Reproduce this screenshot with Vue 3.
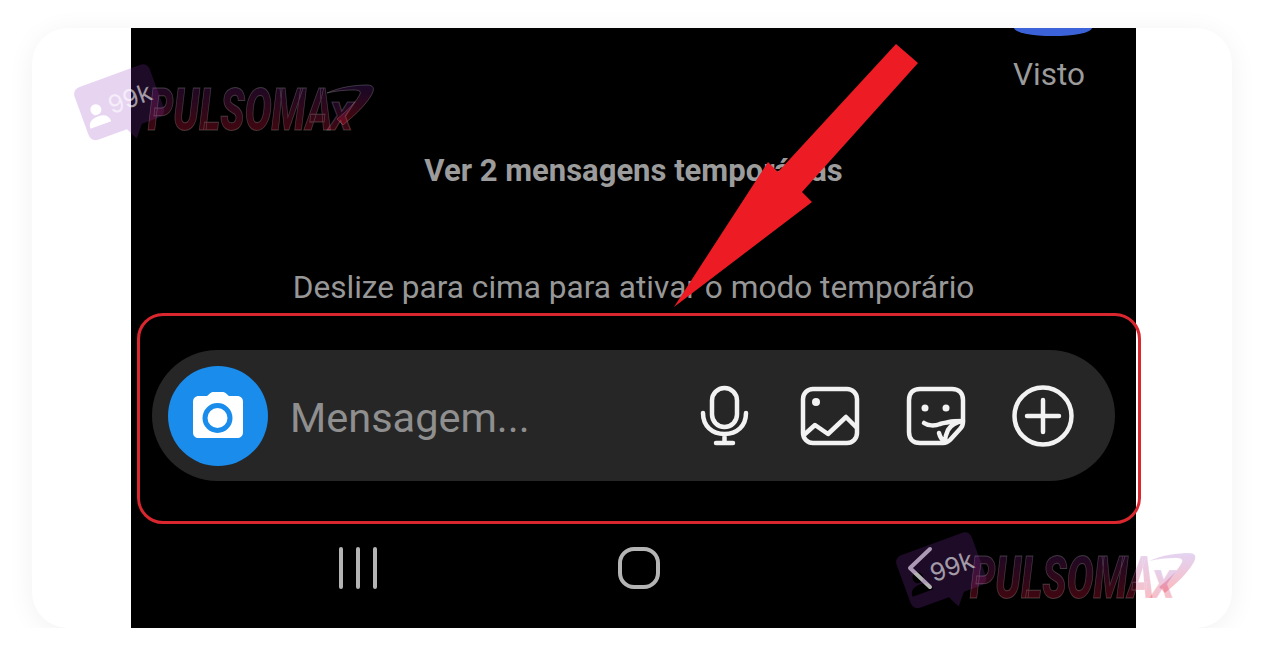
<template>
  <div class="card">
    <div class="phone">
      <div class="avatar" />
      <div class="seen">Visto</div>
      <div class="temp-link">Ver 2 mensagens temporárias</div>
      <div class="temp-hint">Deslize para cima para ativar o modo temporário</div>

      <!-- Message bar -->
      <div class="bar">
        <div class="camera">
          <svg width="56" height="50" viewBox="0 0 56 50">
            <path fill="#fff" d="M9 5h6.500c1.500 0 2.500-.5 3.500-1.800C20.500 1.500 22 1 24 1h8c2 0 3.500.5 5 2.200 1 1.300 2 1.800 3.500 1.800H47c4 0 6 2.500 6 6v30c0 4-2.500 6-6 6H9c-4 0-6-2-6-6V11c0-3.500 2-6 6-6z" />
            <circle cx="27.500" cy="27" r="12.500" fill="none" stroke="#1a8cec" stroke-width="5" />
          </svg>
        </div>
        <span class="placeholder">Mensagem...</span>
        <div class="bar-icons">
          <svg class="ic" width="60" height="62" viewBox="0 0 60 62">
            <rect x="18" y="3" width="25" height="39" rx="12.500" />
            <path d="M9 28c0 13 9 21 21.500 21S52 41 52 28M30.500 49v9M22 58h17" />
          </svg>
          <svg class="ic" width="60" height="62" viewBox="0 0 60 62">
            <rect x="3" y="4" width="54" height="54" rx="10" />
            <circle class="solid" cx="16" cy="17" r="4" />
            <path d="M5 49l10-9 13 9 18-17 10 10" />
          </svg>
          <svg class="ic" width="60" height="62" viewBox="0 0 60 62">
            <path d="M57 37V15C57 8 53 4 46 4H14C7 4 3 8 3 15v32c0 7 4 11 11 11h23c3 0 5-1 7-3l10-11c2-2 3-4 3-7z" />
            <circle class="solid" cx="19" cy="23" r="3.500" />
            <circle class="solid" cx="40" cy="23" r="3.500" />
            <path d="M18 38c4 3 11 3 16 1 3-1 5-1 9-2 4-1 9-1 14-1-7 1-12 4-15 9-2 4-3 9-3 12-3-2-5-5-6-9" />
          </svg>
          <svg class="ic" width="62" height="62" viewBox="0 0 62 62">
            <circle cx="31" cy="31" r="28.500" />
            <path d="M15 31h32M31 15v32" />
          </svg>
        </div>
      </div>

      <!-- Android nav -->
      <div class="nav">
        <div class="nav-slot">
          <svg width="40" height="42" viewBox="0 0 40 42">
            <path class="nav-line" d="M3 2v38M20 2v38M37 2v38" />
          </svg>
        </div>
        <div class="nav-slot">
          <svg width="42" height="42" viewBox="0 0 42 42">
            <rect class="nav-line" x="2" y="2" width="38" height="38" rx="14" />
          </svg>
        </div>
        <div class="nav-slot">
          <svg width="26" height="44" viewBox="0 0 26 44">
            <path class="nav-line" d="M23 3L3 22l20 19" />
          </svg>
        </div>
      </div>
    </div>

    <!-- Annotations -->
    <div class="highlight" />
    <svg class="arrow" width="260" height="280" viewBox="0 0 260 280">
      <polygon fill="#ed1c24" points="240,16 262,35 146,164 156,174 18,279 112,134 122,144" />
    </svg>

    <!-- Watermarks -->
    <svg
      v-for="w in watermarks"
      :key="w.id"
      class="watermark"
      :style="{ left: w.left + 'px', top: w.top + 'px' }"
      width="310"
      height="90"
      viewBox="0 0 310 90"
    >
      <defs>
        <linearGradient :id="'wm-grad-' + w.id" x1="0" y1="0" x2="0" y2="1">
          <stop offset="0" stop-color="rgb(120,40,190)" stop-opacity="0.2" />
          <stop offset="1" stop-color="rgb(255,20,20)" stop-opacity="0.3" />
        </linearGradient>
      </defs>
      <g transform="translate(42,41) rotate(-20)">
        <path
          fill="rgba(140,50,190,.21)"
          fill-rule="evenodd"
          d="M-30-27H34c5 0 8 3 8 8v40c0 5-3 8-8 8H16L6 41 0 29H-30c-5 0-8-3-8-8v-40c0-5 3-8 8-8zM-28 0a5.500 5.500 0 1 0 11 0a5.500 5.500 0 1 0-11 0zM-34 16h22c0-6-4-9-11-9s-11 3-11 9z"
        />
        <text class="wm-count" x="-9" y="10">99k</text>
      </g>
      <g :fill="'url(#wm-grad-' + w.id + ')'" stroke="rgba(255,255,255,.2)" stroke-width="1">
        <path d="M252 32C265 26 280 24 292 24c6 0 8 3 5 9-6 11-17 21-29 31l-6-6c10-8 20-18 23-25 1-3-1-4-7-4-8 0-18 1-26 3z" />
        <text class="wm-text" transform="translate(73,69) scale(.68,1)" x="0" y="0">PULSOMA</text>
        <text class="wm-text wm-x" transform="translate(254,69)" x="0" y="0">X</text>
      </g>
    </svg>
  </div>
</template>

<script setup>
const watermarks = [
  { id: 'a', left: 43, top: 33 },
  { id: 'b', left: 865, top: 501 },
]
</script>

<style scoped>
.card {
  position: relative;
  width: 1200px;
  height: 600px;
  margin: 28px 0 0 32px;
  background: #fff;
  border-radius: 36px;
  box-shadow: 0 4px 28px rgba(0, 0, 0, 0.06);
  overflow: hidden;
}

.phone {
  display: flex;
  flex-direction: column;
  width: 1005px;
  height: 600px;
  margin-left: 99px;
  background: #000;
  font-family: Roboto, "Liberation Sans", sans-serif;
  overflow: hidden;
}

.avatar {
  align-self: flex-end;
  width: 78px;
  height: 8px;
  margin-right: 44px;
  background: #3b62d8;
  border-radius: 0 0 39px 39px / 0 0 8px 8px;
}

.seen {
  align-self: flex-end;
  margin: 22px 51px 0 0;
  color: #9b9b9b;
  font-size: 31.5px;
  line-height: 34px;
}

.temp-link {
  margin-top: 62px;
  color: #9c9c9c;
  font-size: 31px;
  font-weight: 700;
  line-height: 34px;
  text-align: center;
}

.temp-hint {
  margin-top: 83px;
  color: #979797;
  font-size: 31.6px;
  line-height: 34px;
  text-align: center;
}

.bar {
  display: flex;
  align-items: center;
  height: 131px;
  margin: 45px 21px 0;
  padding: 0 41px 0 16px;
  background: #262626;
  border-radius: 66px;
}

.camera {
  display: flex;
  align-items: center;
  justify-content: center;
  width: 100px;
  height: 100px;
  background: #1a8cec;
  border-radius: 50%;
  flex-shrink: 0;
}

.placeholder {
  margin-left: 22px;
  padding-top: 4px;
  color: #8f8f8f;
  font-size: 41.500px;
}

.bar-icons {
  display: flex;
  align-items: center;
  gap: 46px;
  margin-left: auto;
}

.ic {
  fill: none;
  stroke: #f2f2f2;
  stroke-width: 4.500;
  stroke-linecap: round;
  stroke-linejoin: round;
}

.ic .solid {
  fill: #f2f2f2;
  stroke: none;
}

.nav {
  display: flex;
  gap: 221px;
  margin-top: 67px;
  padding-left: 197px;
}

.nav-slot {
  display: flex;
  align-items: center;
  justify-content: center;
  width: 60px;
  height: 40px;
}

.nav-line {
  fill: none;
  stroke: #b4b4b4;
  stroke-width: 4;
  stroke-linecap: round;
  stroke-linejoin: round;
}

.highlight {
  position: absolute;
  left: 105px;
  top: 285px;
  width: 1004px;
  height: 211px;
  border: 3px solid #d9262f;
  border-radius: 26px;
  box-sizing: border-box;
}

.arrow {
  position: absolute;
  left: 624px;
  top: 0;
  overflow: visible;
}

.watermark {
  position: absolute;
  overflow: visible;
  pointer-events: none;
}

.wm-count {
  fill: rgba(255, 255, 255, 0.6);
  font-family: Inter, "Liberation Sans", sans-serif;
  font-size: 25px;
}

.wm-text {
  font-family: Roboto, "Liberation Sans", sans-serif;
  font-size: 59px;
  font-style: italic;
  font-weight: 900;
}

.wm-x {
  font-size: 38px;
}
</style>

<style>
body {
  background: #fff;
}
</style>
